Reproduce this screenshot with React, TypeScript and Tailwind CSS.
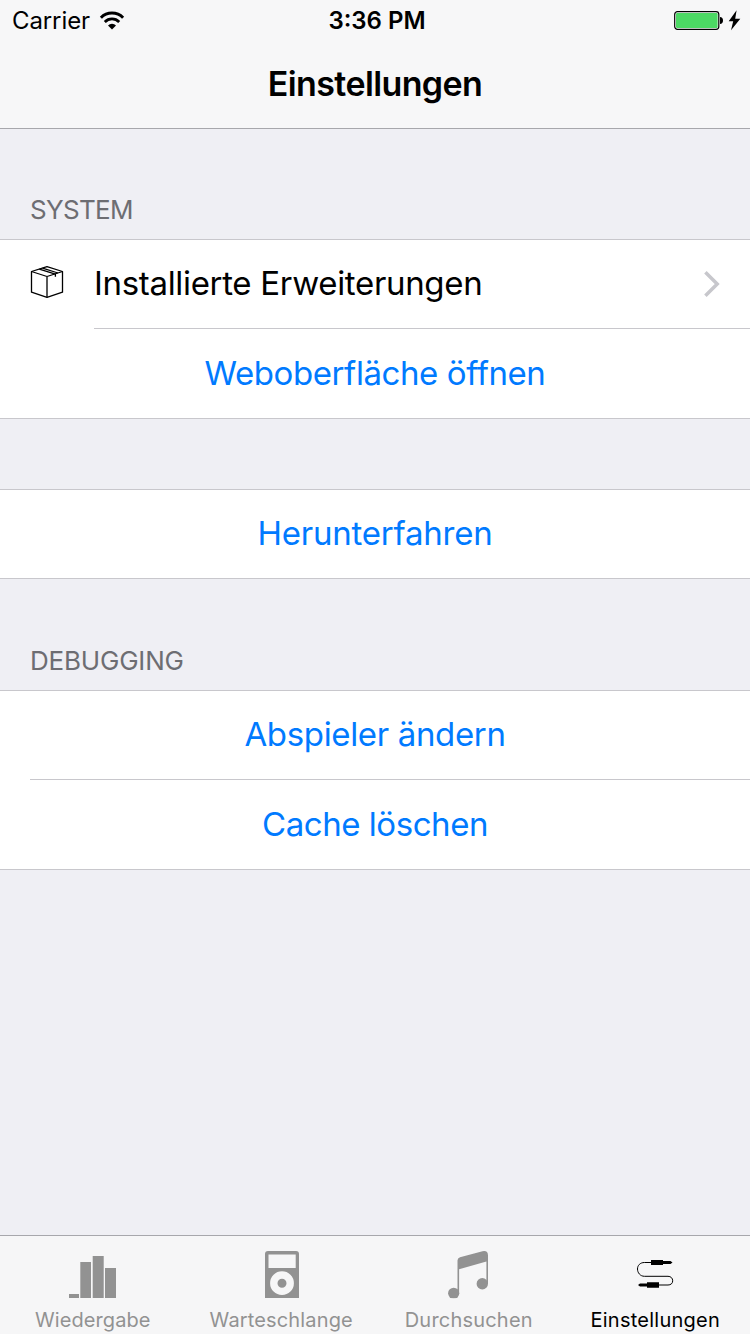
import type { ReactNode } from "react";

function WifiIcon() {
  return (
    <svg width="26" height="20" viewBox="0 0 26 20" fill="none">
      <path d="M1.900 6.700a15.700 15.700 0 0 1 22.200 0" stroke="#000" strokeWidth="3" />
      <path d="M5.800 10.900a10.200 10.200 0 0 1 14.400 0" stroke="#000" strokeWidth="2.8" />
      <path d="M13 18.500l-4-4.100a5.800 5.800 0 0 1 8 0z" fill="#000" />
    </svg>
  );
}

function BatteryIcon() {
  return (
    <svg width="68" height="22" viewBox="0 0 68 22">
      <rect x="0.7" y="1.7" width="44.1" height="17.6" rx="2.8" fill="#fff" stroke="#000" strokeWidth="1.2" />
      <rect x="2" y="3" width="41.6" height="15" rx="1.2" fill="#4cd964" />
      <path d="M46 7c1.800 0 3 1.400 3 3.500S47.800 14 46 14z" fill="#000" />
      <path d="M62.600 .300L54.700 11.300h4.500L57 20.300 66.300 8.800h-5.100z" fill="#000" />
    </svg>
  );
}

function BoxIcon() {
  return (
    <svg width="34" height="34" viewBox="0 0 34 34" fill="none" stroke="#000" strokeWidth="1.3" strokeLinejoin="round">
      <path d="M1.500 6.500L17 1.600l15.500 4.900v20.700L17 32.300 1.500 27.200z" />
      <path d="M1.500 6.500L17 11.500l15.500-5M17 11.500v20.800" />
      <path d="M9.300 4.100L25.400 9.100v2.700M12.500 3.100L28 8" />
    </svg>
  );
}

function BarsIcon() {
  return (
    <svg width="50" height="48" viewBox="0 0 50 48" fill="#929292">
      <path d="M0 43h10v4H0zM11.300 11H22v36H11.300zM23.700 5h11v42h-11zM36 17h11v30H36z" />
    </svg>
  );
}

function PlayerIcon() {
  return (
    <svg width="34" height="48" viewBox="0 0 34 48" className="ml-[2px]">
      <path d="M3 0h28q3 0 3 3v44H0V3q0-3 3-3z" fill="#929292" />
      <path d="M3.500 3.500h27.200V17H3.500z" fill="#f6f6f7" />
      <circle cx="17" cy="32.200" r="8.200" fill="none" stroke="#f6f6f7" strokeWidth="7.400" />
    </svg>
  );
}

function NoteIcon() {
  return (
    <svg width="42" height="48" viewBox="0 0 42 48" fill="#929292">
      <path d="M9.500 41.500V9.500q0-2.500 2.500-3.300L34.500 .200Q40-.800 40 4.500V33h-1.600V10.400L11.100 18.300v23.200z" />
      <circle cx="5.700" cy="42.300" r="5.600" />
      <circle cx="34.300" cy="32.700" r="5.700" />
      <path d="M0 47.200h12V48H0z" fill="#f6f6f7" />
    </svg>
  );
}

function CableIcon() {
  return (
    <svg width="38" height="48" viewBox="0 0 38 48" className="mr-[2px]">
      <path
        d="M16 11.500H8.500C4 11.500 1.500 14.500 1.500 18s2.500 7.300 7 7.300H32c2.800 0 4.700 1.900 4.700 4.500S34.800 34 32 34h-9"
        fill="none"
        stroke="#000"
        strokeWidth="1"
      />
      <path d="M15 9h12v1h7.500l2 1.500-2 1.500H27v1H15zM11 31.200h12v5.500H11v-1.200H4l-2-1.500 2-1.500h7z" fill="#000" />
    </svg>
  );
}

function Chevron() {
  return (
    <svg width="18" height="28" viewBox="0 0 18 28" fill="none">
      <path d="M2.400 2.300L14.200 14 2.400 25.700" stroke="#c7c7cc" strokeWidth="3.500" />
    </svg>
  );
}

function ActionRow({ children, height = "h-[88px]" }: { children: ReactNode; height?: string }) {
  return (
    <button className={`flex w-full items-center justify-center pb-[2px] text-[33px] leading-10 text-[#007aff] ${height}`}>
      {children}
    </button>
  );
}

function Tab({ icon, children, active = false }: { icon: ReactNode; children: ReactNode; active?: boolean }) {
  return (
    <button className={`flex flex-1 flex-col items-center pt-[15px] ${active ? "text-black" : "text-[#929292]"}`}>
      <span className="flex h-[48px] items-center">{icon}</span>
      <span className="mt-[9px] text-[20px] leading-6">{children}</span>
    </button>
  );
}

export default function App() {
  return (
    <div className="flex h-[1334px] w-[750px] flex-col overflow-hidden whitespace-nowrap bg-[#efeff4] font-['Inter',sans-serif] text-black">
      <header className="h-[129px] border-b border-[#a7a7ac] bg-[#f7f7f8]">
        <div className="grid h-[41px] grid-cols-3 items-center text-[24px] leading-[42px]">
          <div className="flex items-center gap-[9px] pl-3">
            <span className="tracking-[-0.1px]">Carrier</span>
            <WifiIcon />
          </div>
          <span className="pl-1 text-center font-semibold">3:36 PM</span>
          <div className="flex justify-end pr-2">
            <BatteryIcon />
          </div>
        </div>
        <h1 className="text-center text-[34px] leading-[86px] font-semibold">
          <span className="tracking-[-0.62px]">Einstellungen</span>
        </h1>
      </header>

      <main className="flex-1">
        <h2 className="h-[110px] pt-[65px] pl-[30px] text-[26px] leading-8 text-[#6d6d72]">
          <span className="tracking-[-0.7px]">SYSTEM</span>
        </h2>
        <section className="border-y border-[#c8c7cc] bg-white">
          <div className="flex h-[88px] items-center pl-[30px]">
            <span className="pb-1">
              <BoxIcon />
            </span>
            <div className="flex flex-1 items-center justify-between pr-[29px] pl-[30px] text-[33px] leading-10">
              <span className="pb-[2px] tracking-[-0.32px]">Installierte Erweiterungen</span>
              <Chevron />
            </div>
          </div>
          <div className="ml-[94px] h-px bg-[#c8c7cc]" />
          <ActionRow height="h-[89px]">
            <span className="tracking-[-0.42px]">Weboberfläche öffnen</span>
          </ActionRow>
        </section>

        <section className="mt-[70px] border-y border-[#c8c7cc] bg-white">
          <ActionRow>
            <span className="tracking-[-0.22px]">Herunterfahren</span>
          </ActionRow>
        </section>

        <h2 className="h-[111px] pt-[66px] pl-[30px] text-[26px] leading-8 text-[#6d6d72]">
          <span className="tracking-[-0.2px]">DEBUGGING</span>
        </h2>
        <section className="border-y border-[#c8c7cc] bg-white">
          <ActionRow>
            <span className="tracking-[-0.35px]">Abspieler ändern</span>
          </ActionRow>
          <div className="ml-[30px] h-px bg-[#c8c7cc]" />
          <ActionRow height="h-[89px]">
            <span className="tracking-[-0.45px]">Cache löschen</span>
          </ActionRow>
        </section>
      </main>

      <nav className="flex h-[99px] border-t border-[#a7a7ac] bg-[#f6f6f7]">
        <Tab icon={<BarsIcon />}>
          <span className="mr-[2px] tracking-[0.1px]">Wiedergabe</span>
        </Tab>
        <Tab icon={<PlayerIcon />}>
          <span className="tracking-[0.15px]">Warteschlange</span>
        </Tab>
        <Tab icon={<NoteIcon />}>
          <span className="tracking-[0.2px]">Durchsuchen</span>
        </Tab>
        <Tab icon={<CableIcon />} active>
          <span className="mr-[2px] tracking-[0.25px]">Einstellungen</span>
        </Tab>
      </nav>
    </div>
  );
}
